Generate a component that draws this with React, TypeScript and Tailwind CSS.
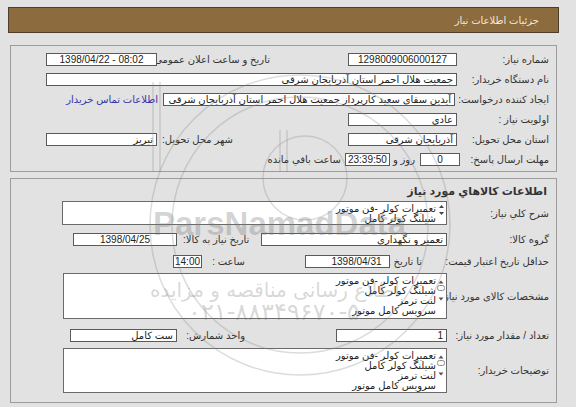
import React from "react";

const font = "font-['Liberation_Sans','DejaVu_Sans',sans-serif]";

function Field({
  className = "",
  pad = "px-[3px]",
  children,
  center = false,
  ltr = false,
}: {
  className?: string;
  pad?: string;
  children?: React.ReactNode;
  center?: boolean;
  ltr?: boolean;
}) {
  return (
    <div
      dir={ltr ? "ltr" : undefined}
      className={`h-[13px] shrink-0 bg-white border border-[#5a5a5a] ${pad} text-[10px] leading-[11px] text-[#222] whitespace-nowrap overflow-hidden ${
        center ? "text-center" : "text-right"
      } ${className}`}
    >
      {children}
    </div>
  );
}

function Label({
  className = "",
  link = false,
  children,
}: {
  className?: string;
  link?: boolean;
  children?: React.ReactNode;
}) {
  return (
    <div className={`shrink-0 whitespace-nowrap text-[10px] ${link ? "text-[#3636a8]" : "text-[#333]"} ${className}`}>
      {children}
    </div>
  );
}

// tiny IE-style scroll control drawn at the right edge of the text areas
function Scroller({ thumb }: { thumb: boolean }) {
  if (!thumb) {
    return (
      <svg width="7" height="12" viewBox="0 0 7 12" className="absolute right-[1px] top-[2px]">
        <path d="M1 4 L3.5 1 L6 4 Z" fill="#444" />
        <path d="M1 8 L3.5 11 L6 8 Z" fill="#444" />
      </svg>
    );
  }
  return (
    <svg width="8" height="22" viewBox="0 0 8 22" className="absolute right-[1px] top-[6px]">
      <path d="M1.5 3.5 L4 0.5 L6.5 3.5 Z" fill="#555" />
      <rect x="0.5" y="5.5" width="7" height="5" rx="2" fill="#fafafa" stroke="#8a8a8a" />
      <path d="M1.5 17.5 L4 20.5 L6.5 17.5 Z" fill="#555" />
    </svg>
  );
}

function Area({ className = "", lines, thumb }: { className?: string; lines: string[]; thumb: boolean }) {
  return (
    <div className={`relative shrink-0 bg-white border border-[#6a6a6a] overflow-hidden ${className}`}>
      <div className="pr-[10px] pt-[2px] text-[10px] leading-[10px] text-[#222] text-right whitespace-nowrap">
        {lines.map((l) => (
          <div key={l}>{l}</div>
        ))}
      </div>
      <Scroller thumb={thumb} />
    </div>
  );
}

const items = ["تعمیرات کولر -فن موتور", "شیلنگ کولر کامل", "لنت ترمز", "سرویس کامل موتور"];

export default function App() {
  return (
    <div className={`relative w-[576px] h-[407px] overflow-hidden bg-[#e2e2e2] pt-[7px] pl-[8px] ${font}`}>
      {/* page title bar */}
      <div className="w-[551px] h-[26px] bg-[#8c6b3e] border border-[#4e3f2c] flex items-center justify-end pr-[19px]">
        <span dir="rtl" className="text-[10px] text-[#f3ead9]">
          جزئیات اطلاعات نیاز
        </span>
      </div>

      {/* need info */}
      <div dir="rtl" className="mt-[12px] ml-[2px] w-[547px] border border-[#9c9c9c] pt-[3px] pb-[2px]">
        <div className="flex items-center h-[20px] pr-[7px]">
          <Label className="w-[92px]">شماره نیاز:</Label>
          <Field className="w-[109px]" center ltr>
            1298009006000127
          </Field>
          <Label className="mr-[78px] w-[108px] text-left">تاریخ و ساعت اعلان عمومی:</Label>
          <Field className="mr-[5px] w-[111px]" center ltr>
            1398/04/22 - 08:02
          </Field>
        </div>
        <div className="flex items-center h-[20px] pr-[7px]">
          <Label className="w-[92px]">نام دستگاه خریدار:</Label>
          <Field className="w-[411px]">جمعیت هلال احمر استان آذربایجان شرقی</Field>
        </div>
        <div className="flex items-center h-[20px] pr-[7px]">
          <Label className="w-[94px]">ایجاد کننده درخواست:</Label>
          <Field className="w-[292px]">آیدین سقای سعید کارپرداز جمعیت هلال احمر استان آذربایجان شرقی</Field>
          <Label className="mr-[5px]" link>
            اطلاعات تماس خریدار
          </Label>
        </div>
        <div className="flex items-center h-[20px] pr-[7px]">
          <Label className="w-[92px]">اولویت نیاز :</Label>
          <Field className="w-[109px]">عادي</Field>
        </div>
        <div className="flex items-center h-[20px] pr-[7px]">
          <Label className="w-[92px]">استان محل تحویل:</Label>
          <Field className="w-[109px]">آذربایجان شرقی</Field>
          <Label className="mr-[78px] w-[108px] text-left">شهر محل تحویل:</Label>
          <Field className="mr-[5px] w-[111px]">تبریز</Field>
        </div>
        <div className="flex items-center h-[20px] pr-[7px]">
          <Label className="w-[89px]">مهلت ارسال پاسخ:</Label>
          <Field className="w-[40px]" center ltr>
            0
          </Field>
          <Label className="mr-[5px]">روز و</Label>
          <Field className="mr-[3px] w-[45px]" pad="px-0" center ltr>
            23:39:50
          </Field>
          <Label className="mr-[4px]">ساعت باقي مانده</Label>
        </div>
      </div>

      {/* goods info */}
      <div dir="rtl" className="mt-[6px] ml-[2px] w-[547px] border border-[#9c9c9c] pt-[5px] pb-[9px]">
        <div className="pr-[9px] text-[11px] leading-[14px] font-bold text-[#333]">اطلاعات کالاهاي مورد نياز</div>

        <div className="flex items-center mt-[3px] pr-[7px]">
          <Label className="w-[102px]">شرح کلي نياز:</Label>
          <Area className="w-[385px] h-[24px]" lines={items.slice(0, 2)} thumb={false} />
        </div>

        <div className="flex items-center mt-[7px] pr-[7px]">
          <Label className="w-[102px]">گروه کالا:</Label>
          <Field className="w-[186px]">تعمیر و نگهداری</Field>
          <Label className="mr-[11px] w-[67px] text-left">تاریخ نیاز به کالا:</Label>
          <Field className="mr-[6px] w-[104px]" center ltr>
            1398/04/25
          </Field>
        </div>

        <div className="flex items-center mt-[7px] pr-[7px]">
          <Label className="w-[127px]">حداقل تاریخ اعتبار قیمت:</Label>
          <Label className="w-[32px] text-right">تا تاریخ :</Label>
          <Field className="w-[85px]" pad="pl-[24px] pr-[6px]" center ltr>
            1398/04/31
          </Field>
          <Label className="mr-[60px] w-[43px] text-right">ساعت :</Label>
          <Field className="w-[29px]" pad="px-0" center ltr>
            14:00
          </Field>
        </div>

        <div className="flex items-center mt-[4px] pr-[7px]">
          <Label className="w-[102px]">مشخصات کالای مورد نیاز:</Label>
          <Area className="w-[384px] h-[46px]" lines={items} thumb />
        </div>

        <div className="flex items-center mt-[9px] pr-[7px]">
          <Label className="w-[102px]">تعداد / مقدار مورد نیاز:</Label>
          <Field className="w-[111px]" ltr>
            1
          </Field>
          <Label className="mr-[91px] w-[63px] text-right">واحد شمارش:</Label>
          <Field className="mr-[5px] w-[107px]">ست کامل</Field>
        </div>

        <div className="flex items-center mt-[5px] pr-[7px]">
          <Label className="w-[102px]">توضیحات خریدار:</Label>
          <Area className="w-[384px] h-[45px]" lines={items} thumb />
        </div>
      </div>

      {/* faint watermark over the page */}
      <div className="pointer-events-none absolute inset-0">
        <svg width="576" height="407" className="absolute left-0 top-0">
          <g fill="none" stroke="rgba(130,130,130,0.28)" strokeWidth="1.5">
            <circle cx="300" cy="225" r="150" />
            <circle cx="300" cy="225" r="128" />
            <circle cx="305" cy="178" r="42" />
            <line x1="153" y1="82" x2="153" y2="172" />
            <line x1="160" y1="82" x2="160" y2="172" />
            <line x1="280" y1="130" x2="280" y2="172" />
            <line x1="287" y1="130" x2="287" y2="172" />
          </g>
        </svg>
        <div className="absolute left-[153px] top-[206px] text-[33px] leading-[36px] font-bold text-[rgba(120,120,120,0.32)] font-['Liberation_Sans',sans-serif]">
          ParsNamadData
        </div>
        <div dir="rtl" className="absolute left-[150px] top-[277px] text-[20px] leading-[26px] text-[rgba(120,120,120,0.3)] font-['DejaVu_Sans',sans-serif] whitespace-nowrap">
          اطلاع رسانی مناقصه و مزایده
        </div>
        <div dir="rtl" className="absolute left-[188px] top-[298px] text-[24px] leading-[28px] text-[rgba(120,120,120,0.3)] font-['DejaVu_Sans',sans-serif] whitespace-nowrap">
          ۰۲۱-۸۸۳۴۹۶۷۰-۵
        </div>
      </div>
    </div>
  );
}
